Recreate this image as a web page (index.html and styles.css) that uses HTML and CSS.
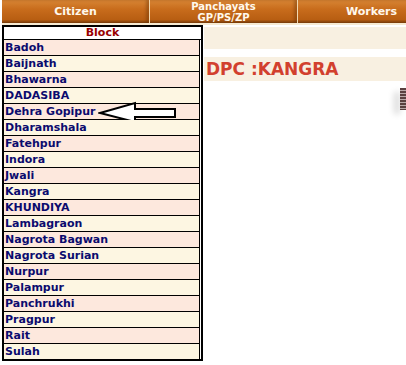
FILE: index.html
```html
<!DOCTYPE html>
<html>
<head>
    <meta charset="utf-8">
    <title>DPC Kangra</title>
    <link rel="stylesheet" href="styles.css">
</head>
<body>
    <div id="menu">
        <div class="menu-btn"><span>Citizen</span></div>
        <div class="menu-btn"><span>Panchayats<br>GP/PS/ZP</span></div>
        <div class="menu-btn"><span>Workers</span></div>
    </div>

    <div id="main">
        <div id="block-list">
            <div class="block-head">Block</div>
            <div class="block-row odd">Badoh</div>
            <div class="block-row even">Baijnath</div>
            <div class="block-row odd">Bhawarna</div>
            <div class="block-row even">DADASIBA</div>
            <div class="block-row odd">Dehra Gopipur
                <svg class="pointer" width="80" height="24" viewBox="0 0 80 24">
                    <polygon points="2,12 37,2 37,8 77,8 77,16 37,16 37,21" fill="#fff" stroke="#000" stroke-width="2" />
                </svg>
            </div>
            <div class="block-row even">Dharamshala</div>
            <div class="block-row odd">Fatehpur</div>
            <div class="block-row even">Indora</div>
            <div class="block-row odd">Jwali</div>
            <div class="block-row even">Kangra</div>
            <div class="block-row odd">KHUNDIYA</div>
            <div class="block-row even">Lambagraon</div>
            <div class="block-row odd">Nagrota Bagwan</div>
            <div class="block-row even">Nagrota Surian</div>
            <div class="block-row odd">Nurpur</div>
            <div class="block-row even">Palampur</div>
            <div class="block-row odd">Panchrukhi</div>
            <div class="block-row even">Pragpur</div>
            <div class="block-row odd">Rait</div>
            <div class="block-row even last">Sulah</div>
        </div>

        <div id="side">
            <div class="band"></div>
            <div class="band title">DPC :KANGRA</div>
            <div class="pic"></div>
        </div>
    </div>
</body>
</html>
```

FILE: styles.css
```css
html, body {
    margin: 0px;
    background-color: #ffffff;
    font-family: "DejaVu Sans", Verdana, sans-serif;
    overflow: hidden;
}

#menu {
    display: flex;
    margin-left: 2px;
    height: 23px;
    border-bottom: 2px solid #f6ead2;
    overflow: hidden;
}
.menu-btn {
    width: 147px;
    flex: none;
    display: flex;
    align-items: center;
    justify-content: center;
    background: linear-gradient(to bottom, #d88635 0%, #c86c1c 40%, #b85e12 85%, #7c3f0a 100%);
    border-right: 1px solid #f3d9b0;
    box-shadow: inset -3px 0px 3px rgba(90, 40, 0, 0.35);
    color: #fff8ec;
    font-size: 10px;
    font-weight: bold;
    text-align: center;
    line-height: 11px;
}
.menu-btn:first-child span,
.menu-btn:last-child span {
    font-size: 11px;
}

#main {
    display: flex;
    align-items: flex-start;
}

#block-list {
    margin-left: 2px;
    width: 197px;
    border: 2px solid #000;
    font-size: 11px;
    font-weight: bold;
}
.block-head {
    height: 12px;
    line-height: 12px;
    text-align: center;
    color: #990000;
    background-color: #fff;
    border-bottom: 1px solid #000;
}
.block-row {
    position: relative;
    height: 15px;
    line-height: 15px;
    padding-left: 1px;
    color: #0b0b6e;
    border-bottom: 1px solid #000;
    margin-right: 1px;
    border-right: 1px solid #000;
}
.block-row.last {
    border-bottom: none;
}
.odd {
    background-color: #fde8dd;
}
.even {
    background-color: #fdf6e2;
}
.pointer {
    position: absolute;
    left: 94px;
    top: -3px;
}

#side {
    flex: 1;
    margin-left: 1px;
    padding-top: 2px;
}
.band {
    height: 22px;
    background-color: #f8f0e1;
}
.band.title {
    margin-top: 8px;
    height: 24px;
    line-height: 24px;
    padding-left: 2px;
    color: #d2402e;
    font-size: 17px;
    font-weight: bold;
}
.pic {
    margin-top: 7px;
    margin-left: auto;
    margin-right: 0px;
    width: 6px;
    height: 22px;
    background: repeating-linear-gradient(to bottom, #5a4040 0px, #5a4040 2px, #b8a8a8 2px, #b8a8a8 3px);
    box-shadow: -6px 4px 6px rgba(0, 0, 0, 0.15);
}
```
